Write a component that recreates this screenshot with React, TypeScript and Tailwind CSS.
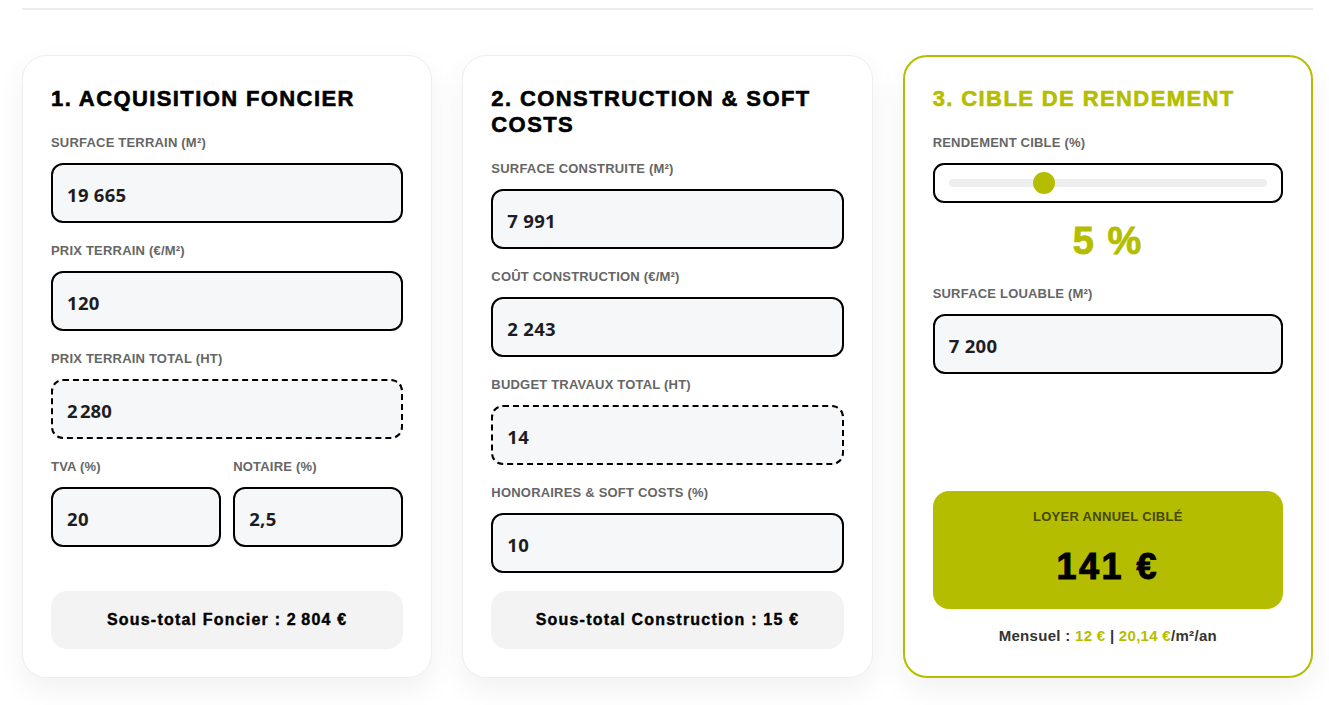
import React from "react";

const OLIVE = "#b5bd00";

function Label({ children }: { children: React.ReactNode }) {
  return (
    <div className="text-[13px] leading-[16px] font-bold uppercase tracking-[0.2px] text-[#666] mb-3 [font-family:'Liberation_Sans',Arial,sans-serif]">
      {children}
    </div>
  );
}

const inputCls =
  "h-[60px] rounded-[12px] border-2 border-black bg-[#f6f7f9] flex items-center px-[14px] pt-[3px] text-[18.5px] font-bold text-[#1d1d1f] tracking-[0.3px] [font-family:'Open_Sans',sans-serif] ";

function Field({
  label,
  value,
  dashed,
}: {
  label: string;
  value: string;
  dashed?: boolean;
}) {
  return (
    <div>
      <Label>{label}</Label>
      <div className={inputCls + (dashed ? "border-dashed" : "border-solid")}>{value}</div>
    </div>
  );
}

function SmallField({ label, value }: { label: string; value: string }) {
  return (
    <div className="flex-1">
      <Label>{label}</Label>
      <div className={inputCls + "border-solid"}>{value}</div>
    </div>
  );
}

const titleCls =
  "text-[22px] leading-[26px] font-bold uppercase tracking-[1.4px] mb-[23px] [font-family:'Liberation_Sans',Arial,sans-serif] [-webkit-text-stroke:0.6px_currentColor]";

function Subtotal({ children }: { children: React.ReactNode }) {
  return (
    <div className="mt-auto h-[58px] rounded-[16px] bg-[#f3f3f3] flex items-center justify-center text-[16px] font-bold tracking-[1.2px] text-black [font-family:'Liberation_Sans',Arial,sans-serif] [-webkit-text-stroke:0.4px_currentColor]">
      {children}
    </div>
  );
}

export default function App() {
  return (
    <div className="min-h-[705px] bg-white [font-family:'Liberation_Sans',Arial,sans-serif]">
      <div className="ml-[22px] w-[1291px] h-[10px] border-b-2 border-[#ececec]" />
      <div className="ml-[22px] w-[1291px] mt-[45px] grid grid-cols-3 gap-[30px]">
        {/* Card 1 */}
        <div className="flex flex-col rounded-[24px] border border-[#eeeeee] bg-white px-[28px] pt-[30px] pb-[28px] shadow-[0_12px_30px_rgba(0,0,0,0.06)]">
          <h2 className={titleCls + " text-black"}>1. Acquisition Foncier</h2>
          <div className="flex flex-col gap-[20px] pb-[18px]">
            <Field label="Surface terrain (m²)" value="19 665" />
            <Field label="Prix terrain (€/m²)" value="120" />
            <Field label="Prix terrain total (HT)" value={"2\u202F280"} dashed />
            <div className="flex gap-[12px]">
              <SmallField label="TVA (%)" value="20" />
              <SmallField label="Notaire (%)" value="2,5" />
            </div>
          </div>
          <Subtotal>Sous-total Foncier : {"2\u202F804"} €</Subtotal>
        </div>

        {/* Card 2 */}
        <div className="flex flex-col rounded-[24px] border border-[#eeeeee] bg-white px-[28px] pt-[30px] pb-[28px] shadow-[0_12px_30px_rgba(0,0,0,0.06)]">
          <h2 className={titleCls + " text-black"}>2. Construction &amp; Soft Costs</h2>
          <div className="flex flex-col gap-[20px] pb-[18px]">
            <Field label="Surface construite (m²)" value="7 991" />
            <Field label="Coût construction (€/m²)" value="2 243" />
            <Field label="Budget travaux total (HT)" value="14" dashed />
            <Field label="Honoraires & soft costs (%)" value="10" />
          </div>
          <Subtotal>Sous-total Construction : 15 €</Subtotal>
        </div>

        {/* Card 3 */}
        <div className="flex flex-col rounded-[24px] border-2 border-[#b5bd00] bg-white px-[28px] pt-[29px] pb-[30px] shadow-[0_12px_30px_rgba(0,0,0,0.06)]">
          <h2 className={titleCls + " text-[#b5bd00]"}>3. Cible de rendement</h2>
          <Label>Rendement cible (%)</Label>
          <div className="h-[40px] rounded-[11px] border-2 border-black bg-white flex items-center px-[14px]">
            <div className="relative h-[8px] w-full rounded-full bg-[#eeeeee]">
              <div
                className="absolute top-1/2 h-[22px] w-[22px] -translate-x-1/2 -translate-y-1/2 rounded-full"
                style={{ left: "30%", backgroundColor: OLIVE }}
              />
            </div>
          </div>
          <div className="mt-[16px] text-center text-[38px] leading-[44px] font-bold tracking-[1.5px] text-[#b5bd00] [-webkit-text-stroke:0.8px_currentColor]">
            5 %
          </div>
          <div className="mt-[23px]">
            <Field label="Surface louable (m²)" value="7 200" />
          </div>
          <div className="mt-auto h-[118px] rounded-[16px] bg-[#b5bd00] flex flex-col items-center pt-[18px]">
            <div className="text-[13px] leading-[16px] font-bold uppercase tracking-[0.3px] text-[#454800]">
              Loyer annuel ciblé
            </div>
            <div className="mt-[20px] text-[36px] leading-[44px] font-bold tracking-[2.5px] text-black [-webkit-text-stroke:1px_currentColor]">
              141 €
            </div>
          </div>
          <div className="mt-[17px] text-center text-[15px] leading-[20px] font-bold tracking-[0.3px] text-[#333]">
            Mensuel : <span className="text-[#b5bd00]">12 €</span> |{" "}
            <span className="text-[#b5bd00]">20,14 €</span>/m²/an
          </div>
        </div>
      </div>
    </div>
  );
}
